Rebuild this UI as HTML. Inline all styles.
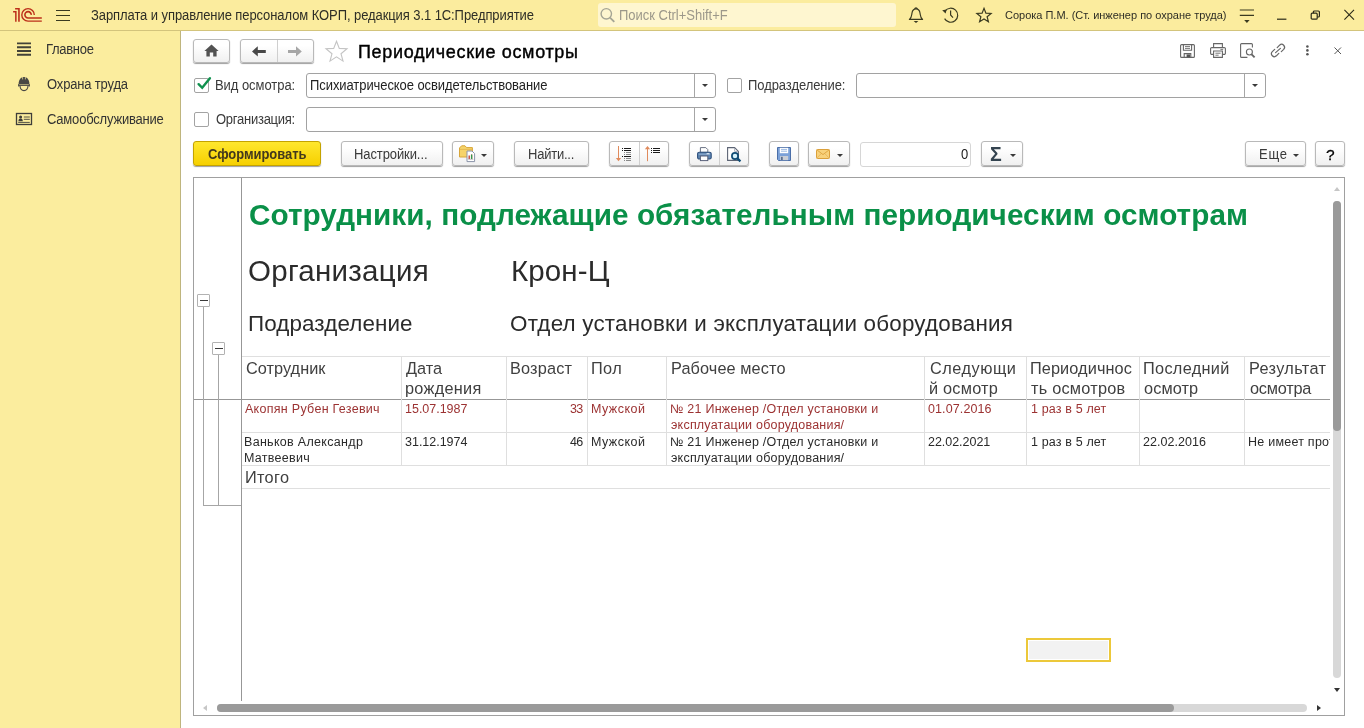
<!DOCTYPE html>
<html lang="ru"><head><meta charset="utf-8"><title>Периодические осмотры</title>
<style>
*{box-sizing:border-box;margin:0;padding:0}
html,body{width:1364px;height:728px;overflow:hidden;background:#fff}
body{font-family:"Liberation Sans",Arial,sans-serif;font-size:13px;color:#3a3a3a;position:relative}
.a{position:absolute;white-space:nowrap}
svg{position:absolute;overflow:visible}
#top{left:0;top:0;width:1364px;height:31px;background:#fbec9e;border-bottom:1px solid #d3c47c}
#side{left:0;top:31px;width:181px;height:697px;background:#fbed9e;border-right:1px solid #bfb57e}
.t{position:absolute;white-space:nowrap;will-change:transform}
.u{font-size:13px;line-height:16px;transform-origin:0 12.5px;transform:scaleY(1.075)}
.btn{position:absolute;height:25px;border:1px solid #b9b9b9;border-radius:3px;background:linear-gradient(#ffffff 25%,#f0f0f0);box-shadow:0 1px 1px rgba(0,0,0,.38)}
.inp{position:absolute;height:25px;border:1px solid #a2a2a2;border-radius:3px;background:#fff}
.inp i{position:absolute;right:20px;top:0;width:1px;height:23px;background:#a6a6a6}
.inp b{position:absolute;right:7.4px;top:10px;width:0;height:0;border-left:3px solid transparent;border-right:3px solid transparent;border-top:3px solid #3a3a3a}
.cb{position:absolute;width:15px;height:15px;border:1px solid #a3a3a3;border-radius:2px;background:#fff}
.tri{position:absolute;width:0;height:0;border-left:3px solid transparent;border-right:3px solid transparent;border-top:3px solid #3a3a3a}
.sep{position:absolute;top:0;width:1px;height:23px;background:#cfcfcf}
.vl{position:absolute;width:1px;background:#dfdfdf}
.hl{position:absolute;height:1px;background:#dfdfdf}
.gb{width:13px;height:13px;border:1px solid #b2b2b2;border-radius:1px;background:#fff}
.gb:after{content:"";position:absolute;left:1.5px;top:5px;width:8px;height:1px;background:#3a3a3a}
</style></head><body>
<div id="top" class="a"></div>
<div id="side" class="a"></div>
<div class="t u" style="left:90.50px;top:7.50px;letter-spacing:-0.082px;color:#2e2e26">Зарплата и управление персоналом КОРП, редакция 3.1 1С:Предприятие</div>
<div class="a" style="left:598px;top:3px;width:298px;height:24px;background:#fef6d0;border-radius:3px"></div>
<!-- 1C logo -->
<svg style="left:0px;top:0px" width="48" height="30" viewBox="0 0 48 30" fill="none" stroke="#bc2f1a">
<path d="M13.1 11.8 H15.85 V21.8" stroke-width="1.5"/>
<path d="M15.1 8.7 H18.95 V21.8" stroke-width="1.6"/>
<path d="M34.3 14.9 A6.25 6.25 0 1 0 28.05 21.15 H41.8" stroke-width="1.4"/>
<path d="M31.2 14.9 A3.15 3.15 0 1 0 28.05 17.95 H41.8" stroke-width="1.6"/>
</svg>
<!-- hamburger -->
<svg style="left:56px;top:9px" width="14" height="12" viewBox="0 0 14 12"><path d="M0 1.5h14M0 6.5h14M0 11.5h14" stroke="#3a3a20" stroke-width="1.1" fill="none"/></svg>
<!-- search magnifier -->
<svg style="left:600px;top:7px" width="16" height="16" viewBox="0 0 16 16" fill="none" stroke="#a5a595" stroke-width="1.4"><circle cx="6.3" cy="6.8" r="5.2"/><path d="M10 10.6l4.3 4.3" stroke-width="1.8"/></svg>
<!-- bell -->
<svg style="left:908px;top:7px" width="16" height="17" viewBox="0 0 16 17" fill="none" stroke="#3a3a20" stroke-width="1.2" stroke-linejoin="round"><path d="M1.4 12.4 C3.8 10.6 3.6 8.2 4 6 C4.4 3.4 6 1.9 8 1.9 C10 1.9 11.6 3.4 12 6 C12.4 8.2 12.2 10.6 14.6 12.4 Z"/><path d="M6.9 1.9 a1.1 1.1 0 0 1 2.2 0"/><path d="M5.6 14.1 h4.8 l-2.4 2 z" fill="#3a3a20" stroke="none"/></svg>
<!-- history -->
<svg style="left:941px;top:6.2px" width="18" height="17" viewBox="0 0 18 17" fill="none" stroke="#3a3a20" stroke-width="1.2"><path d="M4 5.2 A7 7 0 1 1 3.6 12.6"/><path d="M9.6 4.6 V9 L12 11.6"/><path d="M1.2 4.2 L5.6 3.4 L4.6 7.4 Z" fill="#3a3a20" stroke="none"/></svg>
<!-- star -->
<svg style="left:976px;top:7px" width="16" height="16" viewBox="0 0 16 16" fill="none" stroke="#3a3a20" stroke-width="1.2" stroke-linejoin="miter"><path d="M8 1.3 L9.9 6.1 L15.1 6.4 L11.1 9.7 L12.4 14.7 L8 11.9 L3.6 14.7 L4.9 9.7 L0.9 6.4 L6.1 6.1 Z"/></svg>
<!-- menu lines -->
<svg style="left:1239px;top:9px" width="16" height="15" viewBox="0 0 16 15"><path d="M0.8 1h14.2M0.8 6.4h14.2" stroke="#3a3a20" stroke-width="1.1" fill="none"/><path d="M5.2 11.1h5.4l-2.7 3z" fill="#3a3a20"/></svg>
<!-- minimize -->
<svg style="left:1277px;top:18px" width="10" height="3" viewBox="0 0 10 3"><path d="M0 1.2h9.4" stroke="#2a2a18" stroke-width="1.2"/></svg>
<!-- restore -->
<svg style="left:1310px;top:10px" width="11" height="11" viewBox="0 0 11 11" fill="none" stroke="#2a2a18" stroke-width="1.2"><rect x="1.2" y="3.2" width="6" height="6" rx="1"/><path d="M3.4 3.2 V2 a1 1 0 0 1 1 -1 h4 a1 1 0 0 1 1 1 v4 a1 1 0 0 1 -1 1 h-1.2"/></svg>
<!-- close -->
<svg style="left:1344px;top:9px" width="11" height="11" viewBox="0 0 11 11"><path d="M0.4 0.9 L10 10.6 M10 0.9 L0.4 10.6" stroke="#2a2a18" stroke-width="1.1"/></svg>
<!-- sidebar icons -->
<svg style="left:17px;top:42px" width="14" height="14" viewBox="0 0 14 14"><path d="M0 1.4h14M0 5.2h14M0 9h14M0 12.8h14" stroke="#424238" stroke-width="1.9"/></svg>
<svg style="left:0px;top:0px" width="40" height="130" viewBox="0 0 40 130"><path d="M18.6 84.2 C18.6 79.8 20.8 77.1 24 77.1 C27.2 77.1 29.4 79.8 29.4 84.2 Z" fill="#484844"/><path d="M22.6 76.8v2.6M25.4 76.8v2.6" stroke="#fbed9e" stroke-width=".7"/><path d="M18.2 85.3 H29.8" stroke="#484844" stroke-width="1.2"/><path d="M20 86 C20.2 88.8 21.8 90.6 24 90.6 C26.2 90.6 27.8 88.8 28 86" fill="none" stroke="#484844" stroke-width="1.1"/><path d="M18.7 84 v2.6 M29.3 84 v2.6" stroke="#484844" stroke-width=".9"/>
<rect x="16.5" y="113.5" width="15" height="11" fill="none" stroke="#3e3e3a" stroke-width="1.3"/><circle cx="20.6" cy="117" r="1.5" fill="#3e3e3a"/><path d="M18.4 121.2 c0-1.9 1-2.6 2.2-2.6 s2.2 .7 2.2 2.6z" fill="#3e3e3a"/><path d="M23.8 117h6M23.8 119.3h6M18.2 122.4h11.6" stroke="#3e3e3a" stroke-width=".9"/></svg>

<div class="t u" style="left:618.70px;top:7.50px;letter-spacing:-0.015px;color:#9c988a">Поиск Ctrl+Shift+F</div>
<div class="t" style="left:1004.80px;top:8.39px;font-size:11px;line-height:14px;letter-spacing:-0.009px;color:#2e2e26">Сорока П.М. (Ст. инженер по охране труда)</div>
<div class="t u" style="left:45.60px;top:41.50px;letter-spacing:-0.290px;color:#333">Главное</div>
<div class="t u" style="left:46.60px;top:76.50px;letter-spacing:-0.167px;color:#333">Охрана труда</div>
<div class="t u" style="left:46.60px;top:111.50px;letter-spacing:-0.199px;color:#333">Самообслуживание</div>
<div class="btn" style="left:193px;top:39px;width:37px;height:24px"></div>
<div class="btn" style="left:240px;top:39px;width:74px;height:24px"><span class="sep" style="left:36px;height:22px"></span></div>
<div class="t" style="left:358.00px;top:40.86px;font-size:18px;line-height:22px;letter-spacing:0.661px;color:#000;-webkit-text-stroke:0.4px #000">Периодические осмотры</div>
<div class="cb" style="left:194px;top:78px"></div>
<div class="t u" style="left:214.70px;top:77.50px;letter-spacing:-0.051px">Вид осмотра:</div>
<div class="inp" style="left:306px;top:73px;width:410px"><i></i><b></b></div>
<div class="t u" style="left:309.60px;top:77.50px;letter-spacing:-0.076px;color:#222">Психиатрическое освидетельствование</div>
<div class="cb" style="left:727px;top:78px"></div>
<div class="t u" style="left:747.70px;top:77.50px;letter-spacing:-0.072px">Подразделение:</div>
<div class="inp" style="left:856px;top:73px;width:410px"><i></i><b></b></div>
<div class="cb" style="left:194px;top:112px"></div>
<div class="t u" style="left:215.70px;top:111.50px;letter-spacing:-0.255px">Организация:</div>
<div class="inp" style="left:306px;top:107px;width:410px"><i></i><b></b></div>
<div class="btn" style="left:193px;top:141px;width:128px;background:linear-gradient(#ffe72e,#f6d000);border-color:#c4a300"></div>
<div class="t u" style="left:207.50px;top:146.50px;letter-spacing:-0.049px;color:#43391c;font-weight:bold">Сформировать</div>
<div class="btn" style="left:341px;top:141px;width:102px"></div>
<div class="t u" style="left:354.30px;top:146.50px;letter-spacing:-0.097px">Настройки...</div>
<div class="btn" style="left:452px;top:141px;width:42px"></div>
<div class="btn" style="left:514px;top:141px;width:75px"></div>
<div class="t u" style="left:527.70px;top:146.50px;letter-spacing:-0.231px">Найти...</div>
<div class="btn" style="left:609px;top:141px;width:60px"><span class="sep" style="left:29px"></span></div>
<div class="btn" style="left:689px;top:141px;width:60px"><span class="sep" style="left:29px"></span></div>
<div class="btn" style="left:769px;top:141px;width:30px"></div>
<div class="btn" style="left:808px;top:141px;width:42px"></div>
<div class="a" style="left:860px;top:142px;width:111px;height:25px;border:1px solid #d6d6d6;border-radius:3px;background:#fff"></div>
<div class="t u" style="left:960.50px;top:146.50px;color:#222">0</div>
<div class="btn" style="left:981px;top:141px;width:42px"></div>
<div class="btn" style="left:1245px;top:141px;width:61px"></div>
<div class="t u" style="left:1259.00px;top:146.50px;letter-spacing:0.790px">Еще</div>
<div class="t" style="left:990.00px;top:142.24px;font-size:19.5px;line-height:24px;color:#344450;font-weight:bold">Σ</div>
<div class="btn" style="left:1315px;top:141px;width:30px"></div>
<div class="t" style="left:1325.80px;top:145.23px;font-size:15.5px;line-height:19px;color:#000;-webkit-text-stroke:0.3px #000">?</div>
<!-- home -->
<svg style="left:204px;top:44.4px" width="15" height="13" viewBox="0 0 15 13"><path d="M7.5 0.6 L14.6 7 L12.6 7 L12.6 12.6 L9.2 12.6 L9.2 8.4 L5.8 8.4 L5.8 12.6 L2.4 12.6 L2.4 7 L0.4 7 Z" fill="#525252"/></svg>
<!-- back -->
<svg style="left:252px;top:46px" width="14" height="11" viewBox="0 0 14 11"><path d="M0 5.4 L5.8 0.2 L5.8 3.9 L13.8 3.9 L13.8 6.9 L5.8 6.9 L5.8 10.6 Z" fill="#484848"/></svg>
<!-- forward -->
<svg style="left:288px;top:46px" width="14" height="11" viewBox="0 0 14 11"><path d="M13.8 5.4 L8 0.2 L8 3.9 L0 3.9 L0 6.9 L8 6.9 L8 10.6 Z" fill="#a6a6a6"/></svg>
<!-- fav star -->
<svg style="left:325px;top:40px" width="23" height="22" viewBox="0 0 23 22" fill="none" stroke="#c4c4c4" stroke-width="1.1"><path d="M11.5 1.2 L14.3 8.4 L22 8.8 L16 13.7 L18 21.1 L11.5 16.9 L5 21.1 L7 13.7 L1 8.8 L8.7 8.4 Z"/></svg>
<!-- header right: floppy -->
<svg style="left:1180px;top:44px" width="15" height="14" viewBox="0 0 15 14" fill="none" stroke="#666" stroke-width="1.1"><path d="M1.6 0.6 H13.4 a1 1 0 0 1 1 1 V12.4 a1 1 0 0 1 -1 1 H1.6 a1 1 0 0 1 -1 -1 V1.6 a1 1 0 0 1 1 -1 Z"/><path d="M3.4 0.8 V6.2 H11.6 V0.8"/><path d="M5 2.6 H10 M5 4.4 H10" stroke-width=".9"/><path d="M4.2 13.2 V9.6 H10.8 V13.2"/><rect x="6.6" y="10.4" width="3.4" height="2.8" fill="#555" stroke="none"/></svg>
<!-- header right: printer -->
<svg style="left:1210px;top:43px" width="16" height="15" viewBox="0 0 16 15" fill="none" stroke="#666" stroke-width="1.1"><path d="M3.6 4.6 V0.6 H12.4 V4.6"/><path d="M3.6 11.4 H1.8 a1.2 1.2 0 0 1 -1.2 -1.2 V5.8 a1.2 1.2 0 0 1 1.2 -1.2 H14.2 a1.2 1.2 0 0 1 1.2 1.2 V10.2 a1.2 1.2 0 0 1 -1.2 1.2 H12.4"/><path d="M3.6 8 H12.4 V14.4 H3.6 Z"/><path d="M5.4 10.2 H10.6 M5.4 12.2 H8.6" stroke-width=".9"/><path d="M10.4 6.4 H13.2" stroke-width=".9"/></svg>
<!-- header right: preview -->
<svg style="left:1240px;top:43px" width="16" height="15" viewBox="0 0 16 15" fill="none" stroke="#666" stroke-width="1.1"><path d="M12.4 4.4 V1.6 a1 1 0 0 0 -1 -1 H1.6 a1 1 0 0 0 -1 1 V13.4 a1 1 0 0 0 1 1 H7.4"/><circle cx="9.4" cy="9" r="3"/><path d="M11.6 11.3 L14.6 14.4" stroke-width="1.8"/></svg>
<!-- header right: link -->
<svg style="left:1270px;top:43px" width="16" height="15" viewBox="0 0 16 15" fill="none" stroke="#666" stroke-width="1.2" stroke-linecap="round"><path d="M7.2 4.6 L9.6 2.2 a2.9 2.9 0 0 1 4.1 4.1 L11.3 8.7"/><path d="M8.8 10.4 L6.4 12.8 a2.9 2.9 0 0 1 -4.1 -4.1 L4.7 6.3"/><path d="M5.6 9.6 L10.4 5.4"/></svg>
<!-- header right: dots -->
<svg style="left:1305px;top:45px" width="5" height="12" viewBox="0 0 5 12" fill="#555"><circle cx="2.4" cy="1.5" r="1.3"/><circle cx="2.4" cy="5.4" r="1.3"/><circle cx="2.4" cy="9.3" r="1.3"/></svg>
<!-- header right: close -->
<svg style="left:1334px;top:47px" width="8" height="8" viewBox="0 0 8 8"><path d="M0.5 0.5 L7 7 M7 0.5 L0.5 7" stroke="#555" stroke-width="1"/></svg>
<!-- check mark -->
<svg style="left:195.7px;top:76px" width="15" height="15" viewBox="0 0 15 15"><path d="M2.6 8.2 L6.2 11.8 L13.9 2.2" fill="none" stroke="#10914e" stroke-width="2.4" stroke-linecap="round"/></svg>
<!-- folder + chart -->
<svg style="left:459px;top:145px" width="17" height="18" viewBox="0 0 17 18"><path d="M0.5 3 L2.6 0.8 H6 L7.6 2.6 H13.4 V12 H0.5 Z" fill="#f6d46a" stroke="#d8a63a" stroke-width="1"/><path d="M0.8 4.4 H13" stroke="#e2b44a" stroke-width=".8"/><path d="M8 6 H13 L15.6 8.6 V16.6 H8 Z" fill="#fff" stroke="#8a93a8" stroke-width="1"/><path d="M10.2 14 V10.4 M12.6 14 V9.6" stroke-width="1.3" stroke="#c0392b"/><path d="M12.6 14 V9.6" stroke-width="1.3" stroke="#2e9b4e"/><path d="M9.2 14.3 H14.4" stroke="#999" stroke-width=".6"/></svg>
<div class="tri" style="left:481px;top:154px"></div>
<!-- sort desc -->
<svg style="left:615px;top:146px" width="17" height="16" viewBox="0 0 17 16"><path d="M3.5 0 V13" stroke="#e08a5c" stroke-width="1"/><path d="M0.9 12 H6.1 L3.5 15.2 Z" fill="#e08a5c"/><g fill="#1a1a1a"><rect x="7" y="2" width="1" height="1"/><rect x="9" y="2" width="7" height="1"/><rect x="7" y="4" width="1" height="1"/><rect x="9" y="4" width="7" height="1"/><rect x="7" y="10" width="1" height="1"/><rect x="9" y="10" width="7" height="1"/></g><g fill="#8a8a8a"><rect x="9" y="6" width="1" height="1"/><rect x="11" y="6" width="5" height="1"/><rect x="9" y="8" width="1" height="1"/><rect x="11" y="8" width="5" height="1"/><rect x="9" y="12" width="1" height="1"/><rect x="11" y="12" width="5" height="1"/><rect x="9" y="14" width="1" height="1"/><rect x="11" y="14" width="5" height="1"/></g></svg>
<!-- sort asc -->
<svg style="left:644px;top:146px" width="17" height="16" viewBox="0 0 17 16"><path d="M3.5 2 V15.2" stroke="#e08a5c" stroke-width="1"/><path d="M0.9 3.2 H6.1 L3.5 0 Z" fill="#e08a5c"/><g fill="#1a1a1a"><rect x="7" y="2" width="1" height="1"/><rect x="9" y="2" width="7" height="1"/><rect x="7" y="4" width="1" height="1"/><rect x="9" y="4" width="7" height="1"/><rect x="7" y="6" width="1" height="1"/><rect x="9" y="6" width="7" height="1"/></g></svg>
<!-- printer (toolbar) -->
<svg style="left:697px;top:147px" width="15" height="14" viewBox="0 0 15 14"><path d="M3.4 5.4 V0.6 H8.8 L10.8 2.6 V5.4 Z" fill="#fff" stroke="#6a7284" stroke-width="1"/><rect x="0.6" y="5.2" width="13.6" height="6.8" rx="1.6" fill="#5f86b2" stroke="#2d4f7c" stroke-width="1.1"/><path d="M1.6 7.2 H13.2" stroke="#9db9d8" stroke-width=".8"/><rect x="9.6" y="6.2" width="2.8" height="1" fill="#e8f0f8"/><rect x="3.4" y="9" width="7.4" height="4.6" fill="#fff" stroke="#59617a" stroke-width="1"/></svg>
<!-- preview (toolbar) -->
<svg style="left:727px;top:147px" width="15" height="15" viewBox="0 0 15 15"><path d="M0.6 0.6 H7.6 L11.4 4.4 V13.4 H0.6 Z" fill="#fff" stroke="#5c6474" stroke-width="1.1"/><path d="M7.6 0.8 V4.4 H11.2" fill="none" stroke="#9aa0ac" stroke-width=".8"/><circle cx="8" cy="9" r="3.1" fill="#d6f2fb" stroke="#0f4c75" stroke-width="1.7"/><path d="M10.4 11.4 L13.4 14.4" stroke="#0f4c75" stroke-width="2.2"/></svg>
<!-- floppy (toolbar) -->
<svg style="left:777px;top:147px" width="14" height="14" viewBox="0 0 14 14"><path d="M0.5 0.5 H13.5 V13.5 H1.5 L0.5 12.5 Z" fill="#7ba1d8" stroke="#4a6ea8" stroke-width="1"/><rect x="2.8" y="0.8" width="8.4" height="5.4" fill="#fff"/><path d="M4 2.4 H10 M4 4.2 H10" stroke="#8fb0e0" stroke-width=".9"/><rect x="3.2" y="9" width="8" height="4.2" fill="#c9ced6"/><rect x="4.2" y="9.8" width="1.4" height="3.2" fill="#3f567c"/></svg>
<!-- mail -->
<svg style="left:816px;top:149px" width="14" height="10" viewBox="0 0 14 10"><rect x="0.5" y="0.5" width="13" height="9" rx="1" fill="#f8d27c" stroke="#dba03a" stroke-width="1"/><path d="M0.8 0.8 L7 5.6 L13.2 0.8" fill="none" stroke="#dba03a" stroke-width=".9"/><path d="M0.8 9.2 L5.2 4.6 M13.2 9.2 L8.8 4.6" stroke="#e2ae50" stroke-width=".7"/></svg>
<div class="tri" style="left:837px;top:154px"></div>
<div class="tri" style="left:1010px;top:154px"></div>
<div class="tri" style="left:1293px;top:154px"></div>

<div class="a" style="left:193px;top:177px;width:1152px;height:539px;border:1px solid #a0a0a0;background:#fff"></div>
<div class="vl" style="left:241px;top:178px;height:523px;background:#979797"></div>
<div class="hl" style="left:194px;top:399px;width:1136px;background:#979797"></div>
<div class="vl" style="left:203px;top:307px;height:198px;background:#a6a6a6"></div>
<div class="vl" style="left:218px;top:355px;height:150px;background:#a6a6a6"></div>
<div class="hl" style="left:203px;top:505px;width:38px;background:#a6a6a6"></div>
<div class="a gb" style="left:197px;top:294px"></div>
<div class="a gb" style="left:212px;top:342px"></div>
<div class="t" style="left:248.50px;top:195.61px;font-size:29.7px;line-height:37px;letter-spacing:0.056px;color:#0a9048;font-weight:bold">Сотрудники, подлежащие обязательным периодическим осмотрам</div>
<div class="t" style="left:247.70px;top:252.28px;font-size:29.5px;line-height:37px;letter-spacing:0.275px;color:#2b2b2b">Организация</div>
<div class="t" style="left:510.50px;top:252.28px;font-size:29.5px;line-height:37px;letter-spacing:0.118px;color:#2b2b2b">Крон-Ц</div>
<div class="t" style="left:247.70px;top:309.84px;font-size:22.4px;line-height:28px;letter-spacing:0.116px;color:#2b2b2b">Подразделение</div>
<div class="t" style="left:510.20px;top:309.84px;font-size:22.4px;line-height:28px;letter-spacing:0.217px;color:#2b2b2b">Отдел установки и эксплуатации оборудования</div>
<div class="hl" style="left:242px;top:356px;width:1088px"></div>
<div class="hl" style="left:242px;top:432px;width:1088px"></div>
<div class="hl" style="left:242px;top:465px;width:1088px"></div>
<div class="hl" style="left:242px;top:488px;width:1088px"></div>
<div class="vl" style="left:401px;top:356px;height:110px"></div>
<div class="vl" style="left:506px;top:356px;height:110px"></div>
<div class="vl" style="left:587px;top:356px;height:110px"></div>
<div class="vl" style="left:666px;top:356px;height:110px"></div>
<div class="vl" style="left:924px;top:356px;height:110px"></div>
<div class="vl" style="left:1026px;top:356px;height:110px"></div>
<div class="vl" style="left:1139px;top:356px;height:110px"></div>
<div class="vl" style="left:1244px;top:356px;height:110px"></div>
<div class="t" style="left:246.30px;top:358.35px;font-size:16.3px;line-height:20px;letter-spacing:0.041px;color:#404040">Сотрудник</div>
<div class="t" style="left:405.90px;top:358.35px;font-size:16.3px;line-height:20px;letter-spacing:0.034px;color:#404040">Дата</div>
<div class="t" style="left:404.90px;top:377.95px;font-size:16.3px;line-height:20px;letter-spacing:0.292px;color:#404040">рождения</div>
<div class="t" style="left:510.20px;top:358.35px;font-size:16.3px;line-height:20px;letter-spacing:0.192px;color:#404040">Возраст</div>
<div class="t" style="left:591.20px;top:358.35px;font-size:16.3px;line-height:20px;letter-spacing:0.400px;color:#404040">Пол</div>
<div class="t" style="left:670.50px;top:358.35px;font-size:16.3px;line-height:20px;letter-spacing:0.102px;color:#404040">Рабочее место</div>
<div class="t" style="left:929.70px;top:358.35px;font-size:16.3px;line-height:20px;letter-spacing:0.514px;color:#404040">Следующи</div>
<div class="t" style="left:928.70px;top:377.95px;font-size:16.3px;line-height:20px;letter-spacing:0.234px;color:#404040">й осмотр</div>
<div class="t" style="left:1030.40px;top:358.35px;font-size:16.3px;line-height:20px;letter-spacing:0.097px;color:#404040">Периодичнос</div>
<div class="t" style="left:1031.40px;top:377.95px;font-size:16.3px;line-height:20px;letter-spacing:0.238px;color:#404040">ть осмотров</div>
<div class="t" style="left:1143.00px;top:358.35px;font-size:16.3px;line-height:20px;letter-spacing:0.315px;color:#404040">Последний</div>
<div class="t" style="left:1144.00px;top:377.95px;font-size:16.3px;line-height:20px;letter-spacing:0.091px;color:#404040">осмотр</div>
<div class="t" style="left:1248.50px;top:358.35px;font-size:16.3px;line-height:20px;letter-spacing:0.364px;color:#404040">Результат</div>
<div class="t" style="left:1249.50px;top:377.95px;font-size:16.3px;line-height:20px;letter-spacing:-0.233px;color:#404040">осмотра</div>
<div class="t" style="left:245.30px;top:466.95px;font-size:16.3px;line-height:20px;letter-spacing:0.322px;color:#404040">Итого</div>
<div class="t" style="left:245.30px;top:401.27px;font-size:12.5px;line-height:16px;letter-spacing:0.286px;color:#9c3232">Акопян Рубен Гезевич</div>
<div class="t" style="left:404.90px;top:401.27px;font-size:12.5px;line-height:16px;letter-spacing:-0.012px;color:#9c3232">15.07.1987</div>
<div class="t" style="left:569.80px;top:401.27px;font-size:12.5px;line-height:16px;letter-spacing:-0.752px;color:#9c3232">33</div>
<div class="t" style="left:590.70px;top:401.27px;font-size:12.5px;line-height:16px;letter-spacing:0.464px;color:#9c3232">Мужской</div>
<div class="t" style="left:669.70px;top:401.27px;font-size:12.5px;line-height:16px;letter-spacing:0.235px;color:#9c3232">№ 21 Инженер /Отдел установки и</div>
<div class="t" style="left:670.70px;top:416.97px;font-size:12.5px;line-height:16px;letter-spacing:0.213px;color:#9c3232">эксплуатации оборудования/</div>
<div class="t" style="left:927.70px;top:401.27px;font-size:12.5px;line-height:16px;letter-spacing:0.110px;color:#9c3232">01.07.2016</div>
<div class="t" style="left:1030.70px;top:401.27px;font-size:12.5px;line-height:16px;letter-spacing:0.145px;color:#9c3232">1 раз в 5 лет</div>
<div class="t" style="left:244.30px;top:433.87px;font-size:12.5px;line-height:16px;letter-spacing:0.308px;color:#2a2a2a">Ваньков Александр</div>
<div class="t" style="left:244.30px;top:449.57px;font-size:12.5px;line-height:16px;letter-spacing:0.290px;color:#2a2a2a">Матвеевич</div>
<div class="t" style="left:404.90px;top:433.87px;font-size:12.5px;line-height:16px;letter-spacing:-0.012px;color:#2a2a2a">31.12.1974</div>
<div class="t" style="left:569.80px;top:433.87px;font-size:12.5px;line-height:16px;letter-spacing:-0.752px;color:#2a2a2a">46</div>
<div class="t" style="left:590.70px;top:433.87px;font-size:12.5px;line-height:16px;letter-spacing:0.464px;color:#2a2a2a">Мужской</div>
<div class="t" style="left:669.70px;top:433.87px;font-size:12.5px;line-height:16px;letter-spacing:0.235px;color:#2a2a2a">№ 21 Инженер /Отдел установки и</div>
<div class="t" style="left:670.70px;top:449.57px;font-size:12.5px;line-height:16px;letter-spacing:0.213px;color:#2a2a2a">эксплуатации оборудования/</div>
<div class="t" style="left:927.70px;top:433.87px;font-size:12.5px;line-height:16px;letter-spacing:-0.034px;color:#2a2a2a">22.02.2021</div>
<div class="t" style="left:1030.70px;top:433.87px;font-size:12.5px;line-height:16px;letter-spacing:0.145px;color:#2a2a2a">1 раз в 5 лет</div>
<div class="t" style="left:1143.10px;top:433.87px;font-size:12.5px;line-height:16px;letter-spacing:0.055px;color:#2a2a2a">22.02.2016</div>
<div class="t" style="left:1247.60px;top:433.87px;font-size:12.5px;line-height:16px;letter-spacing:0.240px;color:#2a2a2a;width:82.4px;overflow:hidden">Не имеет противопоказаний</div>
<div class="a" style="left:1026px;top:638px;width:85px;height:24px;border:2px solid #ecc83a;background:#f2f2f2;box-shadow:inset 0 0 0 1px #fff"></div>
<div class="a" style="left:1333px;top:201px;width:8px;height:477px;border-radius:4px;background:#d8d8d8"></div>
<div class="a" style="left:1333px;top:201px;width:8px;height:230px;border-radius:4px;background:#9a9a9a"></div>
<div class="a" style="left:217px;top:704px;width:1090px;height:8px;border-radius:4px;background:#d8d8d8"></div>
<div class="a" style="left:217px;top:704px;width:957px;height:8px;border-radius:4px;background:#9a9a9a"></div>
<div class="a" style="left:1334px;top:187px;width:0;height:0;border-left:3px solid transparent;border-right:3px solid transparent;border-bottom:4px solid #c6c6c6"></div>
<div class="a" style="left:1334px;top:688px;width:0;height:0;border-left:3px solid transparent;border-right:3px solid transparent;border-top:4px solid #333"></div>
<div class="a" style="left:203px;top:705px;width:0;height:0;border-top:3px solid transparent;border-bottom:3px solid transparent;border-right:4px solid #c6c6c6"></div>
<div class="a" style="left:1317px;top:705px;width:0;height:0;border-top:3px solid transparent;border-bottom:3px solid transparent;border-left:4px solid #333"></div>
</body></html>
